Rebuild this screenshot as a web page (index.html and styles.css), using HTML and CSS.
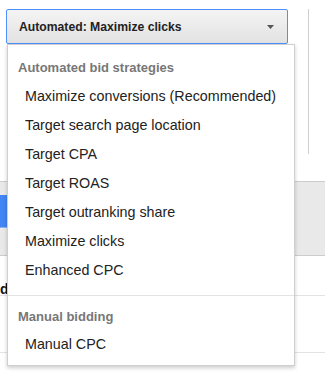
FILE: index.html
```html
<!DOCTYPE html>
<html>
<head>
<meta charset="utf-8">
<link rel="stylesheet" href="styles.css">
</head>
<body>
<div class="page">
  <div class="top">
    <button class="select">
      <span class="select-label">Automated: Maximize clicks</span>
      <svg class="caret" width="7" height="4" viewBox="0 0 7 4"><path d="M0 0H7L3.5 4Z" fill="#555"/></svg>
    </button>
    <div class="vline"></div>
  </div>
  <div class="band">
    <div class="tab"></div>
  </div>
  <div class="label-row"><span class="label">Bid strategy</span></div>
  <div class="section"></div>
</div>

<div class="menu">
  <div class="group">
    <div class="group-title">Automated bid strategies</div>
    <div class="item">Maximize conversions (Recommended)</div>
    <div class="item">Target search page location</div>
    <div class="item">Target CPA</div>
    <div class="item">Target ROAS</div>
    <div class="item">Target outranking share</div>
    <div class="item">Maximize clicks</div>
    <div class="item">Enhanced CPC</div>
  </div>
  <div class="group group-manual">
    <div class="group-title">Manual bidding</div>
    <div class="item">Manual CPC</div>
  </div>
</div>
</body>
</html>
```

FILE: styles.css
```css
html, body {
  margin: 0;
  padding: 0;
  background: #fff;
}
body {
  width: 325px;
  height: 386px;
  overflow: hidden;
  position: relative;
  font-family: "Liberation Sans", Arial, sans-serif;
  color: #222;
}
.page {
  display: flex;
  flex-direction: column;
}
.top {
  display: flex;
  align-items: flex-start;
  padding: 9px 0 0 6px;
  gap: 20px;
}
.select {
  box-sizing: border-box;
  width: 282px;
  height: 35px;
  margin: 0;
  padding: 0 13px 0 12px;
  border: 1px solid #4d90fe;
  border-radius: 2px;
  background: linear-gradient(#f4f4f4, #e2e2e2);
  display: flex;
  align-items: center;
  justify-content: space-between;
  font-family: "Liberation Sans", Arial, sans-serif;
  font-size: 12.2px;
  font-weight: bold;
  color: #222;
}
.select-label {
  padding-top: 1px;
}
.caret {
  display: block;
  margin-top: 1px;
}
.vline {
  width: 1px;
  height: 145px;
  background: #cfcfcf;
}
.band {
  box-sizing: border-box;
  margin-top: 27px;
  height: 75px;
  background: #e9e9e9;
  border-top: 1px solid #cccccc;
  border-bottom: 1px solid #cccccc;
  padding-top: 13px;
}
.tab {
  width: 7px;
  height: 32px;
  background: #4285f4;
  border-bottom: 1px solid #8ab0f0;
}
.label-row {
  box-sizing: border-box;
  height: 40px;
  padding-top: 26px;
  border-bottom: 1px solid #e3e3e3;
  overflow: hidden;
  line-height: 14px;
}
.label {
  display: inline-block;
  margin-left: -14px;
  font-size: 14px;
  font-weight: bold;
  color: #111;
  white-space: nowrap;
}
.section {
  height: 56px;
  border-bottom: 1px solid #e3e3e3;
}
.menu {
  position: absolute;
  left: 7px;
  top: 44px;
  box-sizing: border-box;
  width: 288px;
  height: 322px;
  background: #fff;
  border: 1px solid #cfcfcf;
  box-shadow: 0 2px 4px rgba(0, 0, 0, 0.2);
  padding-top: 8px;
}
.group {
  padding-bottom: 10px;
}
.group-manual {
  border-top: 1px solid #e3e3e3;
  padding-top: 6px;
  padding-bottom: 0;
}
.group-title {
  height: 29px;
  line-height: 29px;
  padding-left: 10px;
  font-size: 13px;
  font-weight: bold;
  color: #777;
}
.group-manual .item {
  height: 27px;
  line-height: 27px;
}
.item {
  height: 29px;
  line-height: 29px;
  padding-left: 17px;
  font-size: 14.3px;
  color: #222;
  white-space: nowrap;
}
```
